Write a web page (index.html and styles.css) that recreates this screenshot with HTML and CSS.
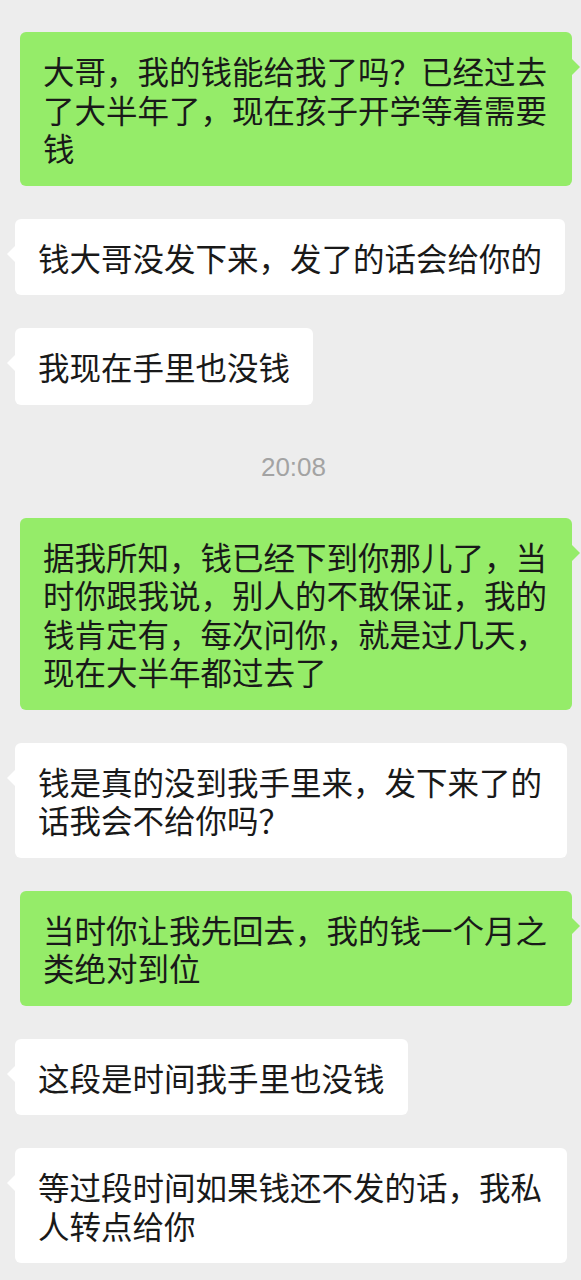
FILE: index.html
```html
<!DOCTYPE html>
<html lang="zh-CN">
<head>
    <meta charset="UTF-8">
    <meta name="viewport" content="width=device-width, initial-scale=1.0">
    <title>聊天记录</title>
    <link rel="stylesheet" href="styles.css">
</head>
<body>
    <div class="chat">
        <div class="row out">
            <div class="bubble">大哥，我的钱能给我了吗？已经过去了大半年了，现在孩子开学等着需要钱</div>
        </div>
        <div class="row in">
            <div class="bubble">钱大哥没发下来，发了的话会给你的</div>
        </div>
        <div class="row in">
            <div class="bubble">我现在手里也没钱</div>
        </div>

        <!-- time divider -->
        <div class="time">20:08</div>

        <div class="row out">
            <div class="bubble">据我所知，钱已经下到你那儿了，当时你跟我说，别人的不敢保证，我的钱肯定有，每次问你，就是过几天，现在大半年都过去了</div>
        </div>
        <div class="row in">
            <div class="bubble">钱是真的没到我手里来，发下来了的话我会不给你吗？</div>
        </div>
        <div class="row out">
            <div class="bubble">当时你让我先回去，我的钱一个月之类绝对到位</div>
        </div>
        <div class="row in">
            <div class="bubble">这段是时间我手里也没钱</div>
        </div>
        <div class="row in">
            <div class="bubble">等过段时间如果钱还不发的话，我私人转点给你</div>
        </div>
    </div>
</body>
</html>
```

FILE: styles.css
```css
body {
    margin: 0;
    background-color: #ededed;
    font-family: "Noto Sans CJK SC", "Noto Sans", sans-serif;
}
.chat {
    display: flex;
    flex-direction: column;
    gap: 33px;
    padding: 32px 9px 40px 15px;
}
.row {
    display: flex;
}
.row.out {
    justify-content: flex-end;
}
.bubble {
    position: relative;
    box-sizing: border-box;
    max-width: 552px;
    padding: 19px 23px;
    border-radius: 6px;
    background: #fff;
    color: #191919;
    font-size: 31.5px;
    line-height: 38.5px;
    text-spacing-trim: space-all;
}
.out .bubble {
    background: #95ec69;
}
/* little arrow on the side of each bubble */
.bubble::before {
    content: "";
    position: absolute;
    top: 27px;
    width: 0;
    height: 0;
    border-style: solid;
    border-color: transparent;
}
.in .bubble::before {
    right: 100%;
    border-width: 8px 8px 8px 0;
    border-right-color: #fff;
}
.out .bubble::before {
    left: 100%;
    border-width: 8px 0 8px 8px;
    border-left-color: #95ec69;
}
.time {
    margin: 14px 0 3px;
    text-align: center;
    font-family: "Liberation Sans", Arial, sans-serif;
    font-size: 26px;
    line-height: 30px;
    color: #a3a3a3;
}
```
